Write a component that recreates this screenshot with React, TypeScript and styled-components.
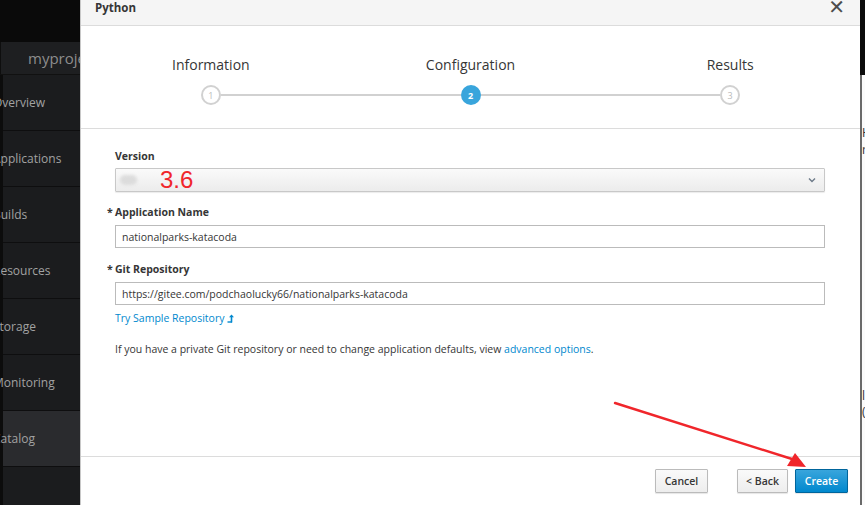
import React from "react";
import styled, { createGlobalStyle } from "styled-components";

const Global = createGlobalStyle`
  html, body { margin: 0; padding: 0; }
  body { width: 865px; height: 505px; overflow: hidden; font-family: "Open Sans", "Noto Sans", sans-serif; background: #fff; }
  #root { width: 865px; height: 505px; }
`;

const Page = styled.div`
  position: relative;
  display: flex;
  width: 865px;
  height: 505px;
  overflow: hidden;
`;

/* ---------- left sidebar ---------- */
const Sidebar = styled.aside`
  width: 80px;
  flex: none;
  display: flex;
  flex-direction: column;
  background: #1b1c1e;
  overflow: hidden;
`;
const TopBlack = styled.div`
  height: 42px;
  background: #0a0a0a;
`;
const ProjectBar = styled.div`
  height: 33px;
  display: flex;
  align-items: center;
  background: #1e1f21;
  border-bottom: 1px solid #111;
  box-sizing: border-box;
`;
const ProjectStub = styled.div`
  width: 8px;
  height: 100%;
  border-right: 1px solid #0e0e0e;
  background: #1a1a1c;
`;
const ProjectName = styled.span`
  margin-left: 19px;
  padding-left: 8px;
  font-size: 15px;
  color: #8d8d8d;
  white-space: nowrap;
`;
const NavList = styled.nav`
  flex: 1;
  display: flex;
  flex-direction: column;
  border-left: 3px solid #0c0c0c;
`;
const NavItem = styled.div<{ $active?: boolean }>`
  height: 56px;
  flex: none;
  box-sizing: border-box;
  display: flex;
  align-items: center;
  border-bottom: 1px solid #0e0e0f;
  background: ${(p) => (p.$active ? "#2a2b2e" : "transparent")};
  font-size: 12px;
  color: #a2a2a2;
  white-space: nowrap;
  span { margin-left: -10px; }
`;

/* ---------- modal ---------- */
const Modal = styled.section`
  width: 780px;
  flex: none;
  display: flex;
  flex-direction: column;
  background: #fff;
  border-left: 1px solid #c8c8c8;
  box-sizing: border-box;
  color: #363636;
`;
const Header = styled.header`
  height: 26px;
  flex: none;
  box-sizing: border-box;
  display: flex;
  justify-content: space-between;
  align-items: flex-start;
  padding: 0 15px 0 14px;
  background: #f5f5f5;
  border-bottom: 1px solid #dcdcdc;
`;
const Title = styled.h4`
  margin: 0;
  font-size: 11.5px;
  font-weight: 700;
  line-height: 16px;
  color: #363636;
`;
const Close = styled.span`
  font-size: 20px;
  line-height: 14px;
  font-weight: 700;
  color: #4d4d4d;
  font-family: "DejaVu Sans", sans-serif;
`;

const Steps = styled.ol`
  margin: 0;
  padding: 0;
  list-style: none;
  height: 103px;
  flex: none;
  box-sizing: border-box;
  border-bottom: 1px solid #dcdcdc;
  display: grid;
  grid-template-columns: repeat(3, 1fr);
`;
const Step = styled.li`
  display: flex;
  flex-direction: column;
  align-items: center;
  padding-top: 30px;
`;
const StepLabel = styled.div`
  font-size: 14px;
  line-height: 18px;
  color: #363636;
`;
const StepTrack = styled.div`
  margin-top: 11px;
  width: 100%;
  display: flex;
  align-items: center;
`;
const Half = styled.div<{ $hidden?: boolean }>`
  flex: 1;
  height: 2px;
  background: ${(p) => (p.$hidden ? "transparent" : "#d1d1d1")};
`;
const Circle = styled.div<{ $active?: boolean }>`
  width: 20px;
  height: 20px;
  box-sizing: border-box;
  border-radius: 50%;
  border: 2px solid ${(p) => (p.$active ? "#39a5dc" : "#d1d1d1")};
  background: ${(p) => (p.$active ? "#39a5dc" : "#fff")};
  color: ${(p) => (p.$active ? "#fff" : "#bbb")};
  font-size: 9px;
  font-weight: ${(p) => (p.$active ? 700 : 400)};
  display: flex;
  align-items: center;
  justify-content: center;
`;

const Body = styled.div`
  flex: 1;
  padding: 0 35px 0 34px;
  display: flex;
  flex-direction: column;
  font-size: 10.5px;
`;
const Label = styled.label<{ $top: number }>`
  margin-top: ${(p) => p.$top}px;
  font-weight: 700;
  line-height: 16px;
  color: #363636;
  display: flex;
`;
const Star = styled.span`
  width: 8px;
  margin-left: -8px;
`;
const Select = styled.div`
  margin-top: 4px;
  height: 24px;
  box-sizing: border-box;
  border: 1px solid #c8c8c8;
  border-radius: 1px;
  background: linear-gradient(#fafafa, #ececec);
  box-shadow: 0 1px 1px rgba(0, 0, 0, 0.08);
  display: flex;
  align-items: center;
  padding: 0 8px 0 4px;
`;
const Blob = styled.div`
  width: 17px;
  height: 10px;
  border-radius: 5px;
  background: #dcdcdc;
  filter: blur(1.5px);
`;
const RedValue = styled.span`
  margin-left: 23px;
  font-family: "Liberation Sans", sans-serif;
  font-size: 24px;
  line-height: 24px;
  color: #f0262b;
`;
const Chevron = styled.svg`
  margin-left: auto;
`;
const Input = styled.div`
  margin-top: 5px;
  height: 23px;
  box-sizing: border-box;
  border: 1px solid #bbb;
  display: flex;
  align-items: center;
  padding: 0 6px;
  color: #363636;
`;
const Link = styled.a`
  margin-top: 5px;
  color: #0088ce;
  text-decoration: none;
  line-height: 16px;
  display: flex;
  align-items: center;
  gap: 3px;
`;
const Help = styled.p`
  margin: 15px 0 0;
  line-height: 16px;
  color: #363636;
  a { color: #0088ce; text-decoration: none; }
`;

const Footer = styled.footer`
  height: 49px;
  flex: none;
  box-sizing: border-box;
  border-top: 1px solid #dcdcdc;
  display: flex;
  justify-content: flex-end;
  align-items: flex-start;
  padding: 12px 12px 0 0;
`;
const Button = styled.button<{ $primary?: boolean; $gap?: number; $w: number }>`
  width: ${(p) => p.$w}px;
  height: 24px;
  margin-left: ${(p) => p.$gap ?? 0}px;
  box-sizing: border-box;
  font-family: inherit;
  font-size: 10.5px;
  font-weight: 600;
  padding: 0;
  border-radius: 1px;
  border: 1px solid ${(p) => (p.$primary ? "#00659c" : "#bbb")};
  background: ${(p) => (p.$primary ? "linear-gradient(#39a5dc, #0088ce)" : "linear-gradient(#fafafa, #ededed)")};
  color: ${(p) => (p.$primary ? "#fff" : "#363636")};
  box-shadow: 0 1px 1px rgba(0, 0, 0, 0.1);
`;

/* ---------- right strip ---------- */
const RightStrip = styled.aside`
  flex: 1;
  display: flex;
  flex-direction: column;
  overflow: hidden;
`;
const RightTop = styled.div`
  height: 75px;
  background: #0b0b0b;
`;
const RightBody = styled.div`
  flex: 1;
  border-left: 2px solid #6a6a6a;
  background: #fbfbfb;
  font-size: 12px;
  color: #333;
  white-space: nowrap;
`;
const Frag = styled.div<{ $top: number }>`
  margin-top: ${(p) => p.$top}px;
  line-height: 16px;
`;

const Annotation = styled.svg`
  position: absolute;
  left: 0;
  top: 0;
  pointer-events: none;
`;

const navItems = ["Overview", "Applications", "Builds", "Resources", "Storage", "Monitoring", "Catalog"];

export default function App() {
  return (
    <>
      <Global />
      <Page>
        <Sidebar>
          <TopBlack />
          <ProjectBar>
            <ProjectStub />
            <ProjectName>myproject</ProjectName>
          </ProjectBar>
          <NavList>
            {navItems.map((n) => (
              <NavItem key={n} $active={n === "Catalog"}>
                <span>{n}</span>
              </NavItem>
            ))}
          </NavList>
        </Sidebar>

        <Modal>
          <Header>
            <Title>Python</Title>
            <Close>✕</Close>
          </Header>
          <Steps>
            {["Information", "Configuration", "Results"].map((s, i) => (
              <Step key={s}>
                <StepLabel>{s}</StepLabel>
                <StepTrack>
                  <Half $hidden={i === 0} />
                  <Circle $active={i === 1}>{i + 1}</Circle>
                  <Half $hidden={i === 2} />
                </StepTrack>
              </Step>
            ))}
          </Steps>
          <Body>
            <Label $top={19}>Version</Label>
            <Select>
              <Blob />
              <RedValue>3.6</RedValue>
              <Chevron width="8" height="6" viewBox="0 0 8 6">
                <path d="M1 1.5 L4 4.5 L7 1.5" fill="none" stroke="#6d7a88" strokeWidth="1.4" />
              </Chevron>
            </Select>
            <Label $top={12}>
              <Star>*</Star>Application Name
            </Label>
            <Input>nationalparks-katacoda</Input>
            <Label $top={13}>
              <Star>*</Star>Git Repository
            </Label>
            <Input>https://gitee.com/podchaolucky66/nationalparks-katacoda</Input>
            <Link>
              Try Sample Repository
              <svg width="7" height="9" viewBox="0 0 7 9">
                <path d="M4.5 8.5 V2.5" stroke="#0088ce" strokeWidth="1.6" fill="none" />
                <path d="M2 3.2 L4.5 0.5 L7 3.2 Z" fill="#0088ce" />
                <path d="M0.5 8 H5" stroke="#0088ce" strokeWidth="1.4" />
              </svg>
            </Link>
            <Help>
              If you have a private Git repository or need to change application defaults, view <a>advanced options</a>.
            </Help>
          </Body>
          <Footer>
            <Button $w={53}>Cancel</Button>
            <Button $w={51} $gap={29}>&lt; Back</Button>
            <Button $w={53} $gap={7} $primary>Create</Button>
          </Footer>
        </Modal>

        <RightStrip>
          <RightTop />
          <RightBody>
            <Frag $top={50}>Hi</Frag>
            <Frag $top={1}>r</Frag>
            <Frag $top={230}>ls</Frag>
            <Frag $top={0}>(</Frag>
          </RightBody>
        </RightStrip>

        <Annotation width="865" height="505" viewBox="0 0 865 505">
          <path d="M615 403 L792 459" stroke="#f0262b" strokeWidth="2.4" fill="none" strokeLinecap="round" />
          <path d="M806 467 L787 466 L795 453 Z" fill="#f0262b" />
        </Annotation>
      </Page>
    </>
  );
}
